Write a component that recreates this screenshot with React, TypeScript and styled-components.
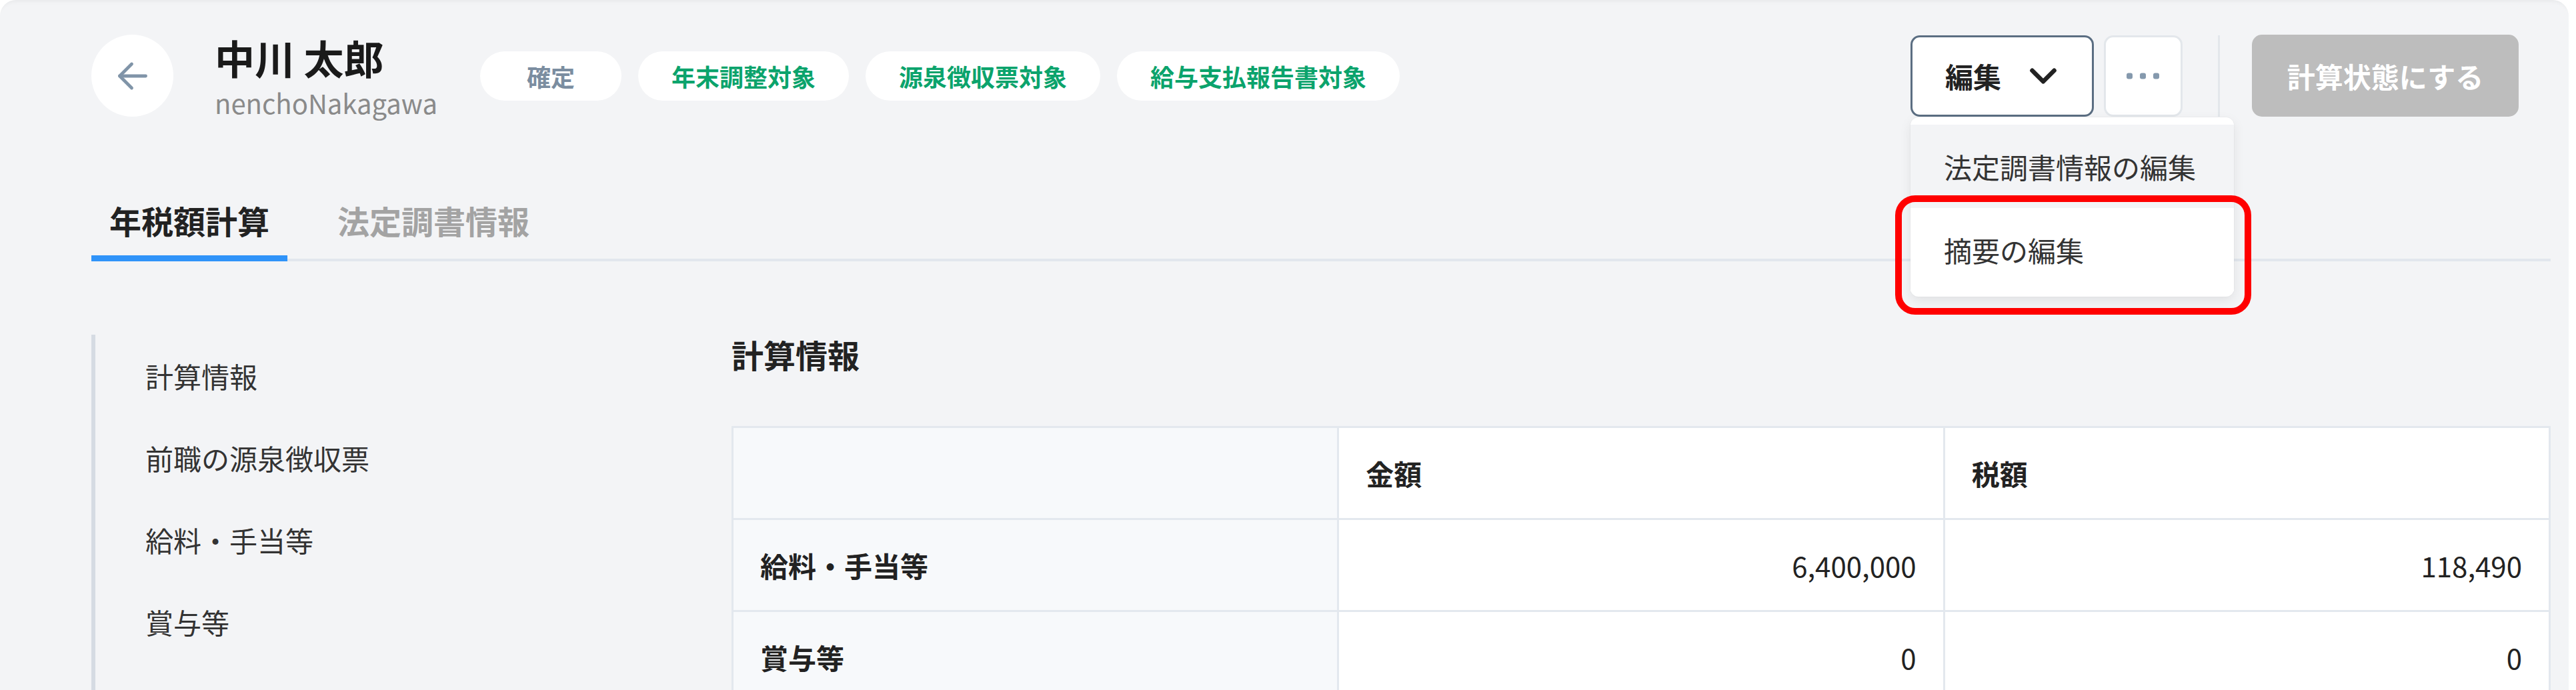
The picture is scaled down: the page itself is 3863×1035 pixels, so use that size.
import React from "react";
import styled, { createGlobalStyle } from "styled-components";

const GlobalStyle = createGlobalStyle`
  html, body { margin: 0; padding: 0; background: #ffffff; }
  body {
    font-family: "Noto Sans CJK JP", "Noto Sans", sans-serif;
    color: #222;
    overflow: hidden;
  }
  * { box-sizing: border-box; }
`;

const Page = styled.div`
  width: 3852px;
  min-height: 1035px;
  background: #f3f4f6;
  border-radius: 24px 24px 0 0;
  box-shadow: inset 0 8px 6px -6px rgba(0, 0, 0, 0.05);
  padding: 52px 27px 0 137px;
`;

const Header = styled.header`
  display: flex;
  align-items: center;
  height: 123px;
`;

const BackButton = styled.button`
  width: 123px;
  height: 123px;
  border-radius: 50%;
  border: none;
  background: #ffffff;
  display: flex;
  align-items: center;
  justify-content: center;
  padding: 0;
  flex-shrink: 0;
`;

const NameBlock = styled.div`
  display: flex;
  flex-direction: column;
  margin-left: 62px;
`;

const Name = styled.div`
  font-size: 60px;
  line-height: 80px;
  font-weight: 700;
  color: #1a1a1a;
`;

const Username = styled.div`
  font-size: 40px;
  line-height: 56px;
  color: #8a8a8a;
`;

const TagList = styled.div`
  display: flex;
  gap: 25px;
  margin-left: 64px;
`;

const Tag = styled.span<{ $tone: "muted" | "green" }>`
  height: 74px;
  min-width: 212px;
  padding: 0 50px;
  border-radius: 37px;
  background: #ffffff;
  display: inline-flex;
  align-items: center;
  justify-content: center;
  font-size: 36px;
  font-weight: 700;
  color: ${(p) => (p.$tone === "muted" ? "#7b8da0" : "#0ba36c")};
`;

const Actions = styled.div`
  display: flex;
  align-items: center;
  margin-left: auto;
  margin-right: 48px;
`;

const EditWrap = styled.div`
  position: relative;
`;

const EditButton = styled.button`
  width: 275px;
  height: 122px;
  border: 3px solid #5b6e82;
  border-radius: 14px;
  background: #ffffff;
  display: flex;
  align-items: center;
  gap: 30px;
  padding: 0 0 0 49px;
  font-family: inherit;
  font-size: 42px;
  font-weight: 700;
  color: #222;
`;

const MoreButton = styled.button`
  width: 118px;
  height: 122px;
  margin-left: 15px;
  border: 3px solid #e3e7eb;
  border-radius: 14px;
  background: #ffffff;
  display: flex;
  align-items: center;
  justify-content: center;
  padding: 0;
`;

const Divider = styled.div`
  width: 3px;
  height: 122px;
  background: #e3e7eb;
  margin: 0 48px 0 53px;
`;

const PrimaryButton = styled.button`
  width: 400px;
  height: 123px;
  border: none;
  border-radius: 15px;
  background: #bdbdbd;
  color: #ffffff;
  font-family: inherit;
  font-size: 42px;
  font-weight: 700;
  display: flex;
  align-items: center;
  justify-content: center;
`;

const Menu = styled.div`
  position: absolute;
  top: calc(100% + 1px);
  left: 0;
  width: 485px;
  padding: 11px 0 8px;
  background: #ffffff;
  border-radius: 12px;
  box-shadow: 0 6px 18px rgba(0, 0, 0, 0.08), 0 0 0 1px rgba(0, 0, 0, 0.02);
  z-index: 10;
`;

const MenuItem = styled.div<{ $hover?: boolean }>`
  height: 125px;
  display: flex;
  align-items: center;
  padding-left: 50px;
  font-size: 42px;
  color: #333;
  background: ${(p) => (p.$hover ? "#f3f4f6" : "#ffffff")};
`;

const Highlight = styled.div`
  position: absolute;
  left: -23px;
  top: 117px;
  width: 534px;
  height: 179px;
  border: 10px solid #ff0000;
  border-radius: 30px;
  pointer-events: none;
  z-index: 11;
`;

const TabList = styled.nav`
  display: flex;
  gap: 48px;
  margin-top: 119px;
  border-bottom: 4px solid #e2e7ed;
`;

const Tab = styled.div<{ $active?: boolean }>`
  font-size: 48px;
  line-height: 72px;
  font-weight: 700;
  padding: 0 27px 17px;
  margin-bottom: -4px;
  color: ${(p) => (p.$active ? "#222" : "#a3a3a3")};
  border-bottom: 9px solid ${(p) => (p.$active ? "#2f93f9" : "transparent")};
`;

const Content = styled.div`
  display: grid;
  grid-template-columns: 960px 1fr;
  margin-top: 110px;
`;

const SideNav = styled.nav`
  border-left: 6px solid #d5dbe3;
  display: flex;
  flex-direction: column;
`;

const NavItem = styled.div`
  padding: 30px 0 30px 75px;
  font-size: 42px;
  line-height: 63px;
  color: #333;
`;

const Main = styled.main`
  display: flex;
  flex-direction: column;
`;

const SectionTitle = styled.h2`
  margin: 0;
  font-size: 48px;
  line-height: 58px;
  font-weight: 700;
  color: #222;
`;

const Table = styled.table`
  margin-top: 79px;
  width: 100%;
  table-layout: fixed;
  border-collapse: collapse;
`;

const Cell = styled.td<{ $label?: boolean; $num?: boolean; $head?: boolean }>`
  border: 3px solid #e3e8ee;
  padding: 36px 40px;
  font-size: 42px;
  line-height: 63px;
  height: 138px;
  font-weight: ${(p) => (p.$label || p.$head ? 700 : 400)};
  text-align: ${(p) => (p.$num ? "right" : "left")};
  background: ${(p) => (p.$label ? "#f7f9fb" : "#ffffff")};
  color: #222;
`;

const ArrowLeft = () => (
  <svg width="72" height="72" viewBox="0 0 24 24" fill="none" stroke="#8094a8" strokeWidth="1.6" strokeLinecap="round" strokeLinejoin="round">
    <path d="M18.5 12H5.5" />
    <path d="M11.5 6l-6 6 6 6" />
  </svg>
);

const ChevronDown = () => (
  <svg width="66" height="66" viewBox="0 0 24 24" fill="none" stroke="#222" strokeWidth="2.4" strokeLinecap="round" strokeLinejoin="round">
    <path d="m6 9 6 6 6-6" />
  </svg>
);

const Dots = () => (
  <svg width="50" height="10" viewBox="0 0 50 10" fill="#8599ad">
    <rect x="0" y="0.5" width="9" height="9" rx="3" />
    <rect x="20" y="0.5" width="9" height="9" rx="3" />
    <rect x="40" y="0.5" width="9" height="9" rx="3" />
  </svg>
);

const tags: { label: string; tone: "muted" | "green" }[] = [
  { label: "確定", tone: "muted" },
  { label: "年末調整対象", tone: "green" },
  { label: "源泉徴収票対象", tone: "green" },
  { label: "給与支払報告書対象", tone: "green" },
];

const navItems = ["計算情報", "前職の源泉徴収票", "給料・手当等", "賞与等"];

const rows = [
  { label: "給料・手当等", amount: "6,400,000", tax: "118,490" },
  { label: "賞与等", amount: "0", tax: "0" },
];

export default function App() {
  return (
    <>
      <GlobalStyle />
      <Page>
        <Header>
          <BackButton aria-label="戻る">
            <ArrowLeft />
          </BackButton>
          <NameBlock>
            <Name>中川 太郎</Name>
            <Username>nenchoNakagawa</Username>
          </NameBlock>
          <TagList>
            {tags.map((t) => (
              <Tag key={t.label} $tone={t.tone}>
                {t.label}
              </Tag>
            ))}
          </TagList>
          <Actions>
            <EditWrap>
              <EditButton>
                <span>編集</span>
                <ChevronDown />
              </EditButton>
              <Menu>
                <MenuItem $hover>法定調書情報の編集</MenuItem>
                <MenuItem>摘要の編集</MenuItem>
                <Highlight />
              </Menu>
            </EditWrap>
            <MoreButton aria-label="その他">
              <Dots />
            </MoreButton>
            <Divider />
            <PrimaryButton disabled>計算状態にする</PrimaryButton>
          </Actions>
        </Header>

        <TabList>
          <Tab $active>年税額計算</Tab>
          <Tab>法定調書情報</Tab>
        </TabList>

        <Content>
          <SideNav>
            {navItems.map((n) => (
              <NavItem key={n}>{n}</NavItem>
            ))}
          </SideNav>
          <Main>
            <SectionTitle>計算情報</SectionTitle>
            <Table>
              <thead>
                <tr>
                  <Cell as="th" $label />
                  <Cell as="th" $head>金額</Cell>
                  <Cell as="th" $head>税額</Cell>
                </tr>
              </thead>
              <tbody>
                {rows.map((r) => (
                  <tr key={r.label}>
                    <Cell as="th" $label>{r.label}</Cell>
                    <Cell $num>{r.amount}</Cell>
                    <Cell $num>{r.tax}</Cell>
                  </tr>
                ))}
              </tbody>
            </Table>
          </Main>
        </Content>
      </Page>
    </>
  );
}
